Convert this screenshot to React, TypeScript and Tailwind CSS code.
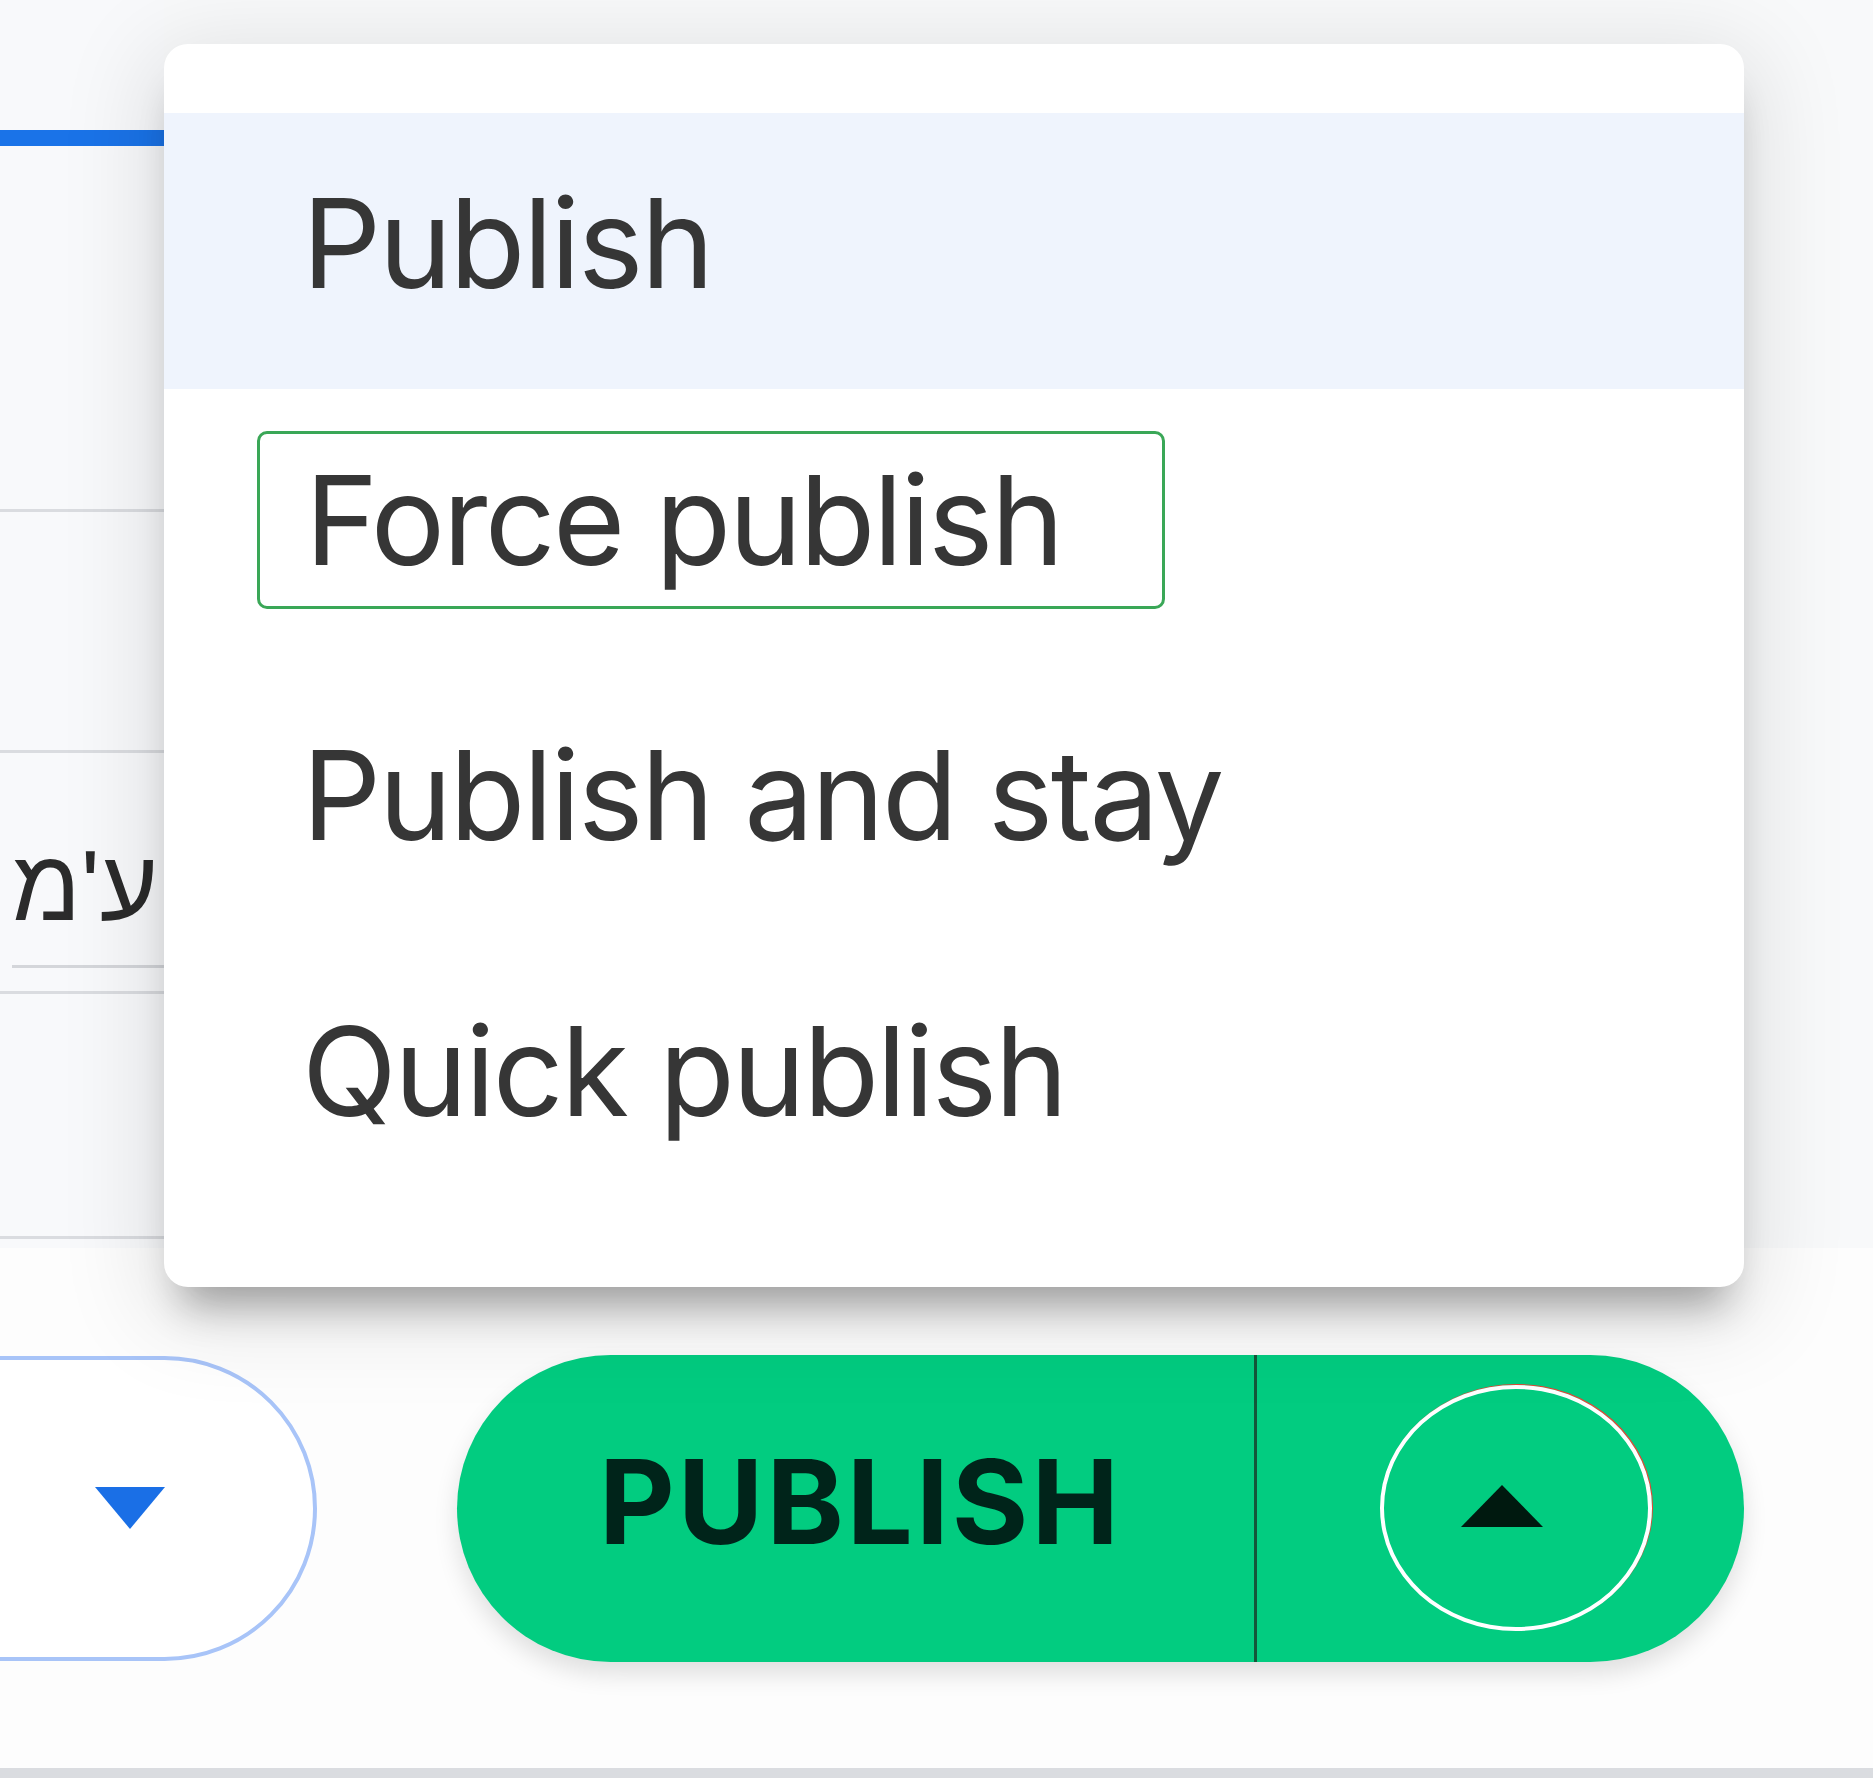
import React from "react";

const items = ["Publish", "Force publish", "Publish and stay", "Quick publish"];

const PublishMenu = () => {
  return (
    <div className="absolute left-[164px] top-[44px] z-10 w-[1580px] h-[1243px] rounded-[24px] bg-white py-[69px] text-[124px] leading-none text-[#363636] tracking-[-2.5px] shadow-[0_36px_40px_-18px_rgba(0,0,0,0.32),0_20px_90px_18px_rgba(0,0,0,0.10)]">
      {items.map((label, i) => (
        <div
          key={label}
          className={
            i === 0
              ? "flex items-center h-[276px] pl-[138px] bg-[#eff4fd]"
              : "flex items-center h-[276px] pl-[138px]"
          }
        >
          {i === 1 ? (
            <span className="-ml-[45px] pl-[45px] pr-[100px] h-[178px] -translate-y-[7px] flex items-center rounded-[10px] border-[3px] border-[#3aa757]">
              {label}
            </span>
          ) : (
            <span className="-translate-y-[8px]">{label}</span>
          )}
        </div>
      ))}
    </div>
  );
};

export default function App() {
  return (
    <div
      className="relative w-[1873px] h-[1778px] overflow-hidden bg-[#f8f9fa] flex flex-col text-[#333333]"
      style={{ fontFamily: "Inter, 'Noto Sans', sans-serif" }}
    >
      <PublishMenu />

      {/* page behind the menu */}
      <div className="h-[1248px] flex flex-row">
        <div className="w-[164px] flex flex-col bg-[#f8f9fb]">
          <div className="h-[130px]" />
          <div className="h-[16px] bg-[#1a73e8]" />
          <div className="h-[366px] border-b-[3px] border-[#dadce0]" />
          <div className="h-[241px] border-b-[3px] border-[#dadce0]" />
          <div className="h-[241px] border-b-[3px] border-[#dadce0] flex flex-col justify-end">
            <div
              className="ml-[12px] text-[100px] leading-none text-[#2b2b2b] pb-[30px] border-b-[3px] border-[#d4d6da]"
              style={{ fontFamily: "'Liberation Sans', 'DejaVu Sans', sans-serif" }}
            >
              ע'מ
            </div>
            <div className="h-[23px]" />
          </div>
          <div className="flex-1 border-b-[3px] border-[#dadce0]" />
          <div className="h-[9px]" />
        </div>
        <div className="flex-1" />
      </div>

      {/* action bar */}
      <div className="flex-1 bg-[#fdfdfd] border-b-[10px] border-[#dadce0] flex flex-row items-center">
        <div className="-ml-[200px] w-[517px] h-[305px] rounded-full border-[4px] border-[#a8c4f8] bg-white flex items-center justify-end pr-[148px]">
          <svg width="70" height="42" viewBox="0 0 70 42">
            <polygon points="0,0 70,0 35,42" fill="#1a6fe6" />
          </svg>
        </div>

        <div className="ml-[140px] w-[1287px] h-[307px] rounded-full bg-[#02cc80] flex flex-row overflow-hidden shadow-[0_12px_24px_rgba(0,0,0,0.12)]">
          <div className="w-[797px] flex items-center pl-[142px]">
            <span className="-mt-[14px] text-[117px] font-bold leading-none text-[#00241a] tracking-[3px]">
              PUBLISH
            </span>
          </div>
          <div className="w-[3px] bg-[#14563a]" />
          <div className="flex-1 flex items-center justify-center">
            <div className="ml-[30px] w-[272px] h-[246px] rounded-[50%] border-[4px] border-white shadow-[1px_-1px_0_0_#ea4335] flex items-center justify-center">
              <svg className="-ml-[28px] -mt-[4px]" width="82" height="42" viewBox="0 0 82 42">
                <polygon points="41,0 82,42 0,42" fill="#00190f" />
              </svg>
            </div>
          </div>
        </div>
      </div>
    </div>
  );
}
